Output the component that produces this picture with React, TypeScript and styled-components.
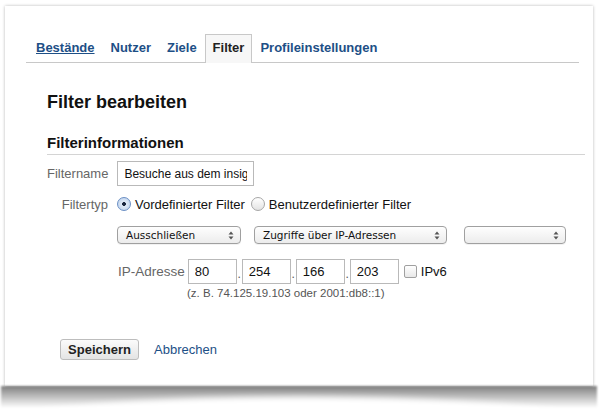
import React, { useState } from "react";
import styled, { createGlobalStyle } from "styled-components";

const GlobalStyle = createGlobalStyle`
  html, body {
    margin: 0;
    padding: 0;
    background: #fff;
  }
  body {
    font-family: "Liberation Sans", Arial, sans-serif;
    color: #222;
  }
`;

const TABS = ["Bestände", "Nutzer", "Ziele", "Filter", "Profileinstellungen"];

const SelectArrows = () => (
  <svg width="6" height="9" viewBox="0 0 6 9">
    <path d="M3 0.5 L5.5 3.5 H0.5 Z" fill="#555" />
    <path d="M3 8.5 L5.5 5.5 H0.5 Z" fill="#555" />
  </svg>
);

export default () => {
  const [type, setType] = useState("predefined");
  const [ipv6, setIpv6] = useState(false);

  return (
    <>
      <GlobalStyle />
      <Page>
        <Card>
          <TabBar>
            {TABS.map((t, i) => (
              <Tab key={t} active={t === "Filter"} underline={i === 0}>
                {t}
              </Tab>
            ))}
          </TabBar>

          <Content>
            <Heading>Filter bearbeiten</Heading>
            <SubHeading>Filterinformationen</SubHeading>

            <FieldRow top={6}>
              <Label>Filtername</Label>
              <TextInput defaultValue="Besuche aus dem insightsite" />
            </FieldRow>

            <FieldRow top={9}>
              <Label>Filtertyp</Label>
              <RadioRow>
                <RadioOption onClick={() => setType("predefined")}>
                  <Radio checked={type === "predefined"} />
                  Vordefinierter Filter
                </RadioOption>
                <RadioOption onClick={() => setType("custom")}>
                  <Radio checked={type === "custom"} />
                  Benutzerdefinierter Filter
                </RadioOption>
              </RadioRow>
            </FieldRow>

            <FieldRow top={13}>
              <Label />
              <SelectRow>
                <Select width={124}>
                  <span>Ausschließen</span>
                  <SelectArrows />
                </Select>
                <Select width={193}>
                  <span>Zugriffe über IP-Adressen</span>
                  <SelectArrows />
                </Select>
                <Select width={102} extra={4}>
                  <span />
                  <SelectArrows />
                </Select>
              </SelectRow>
            </FieldRow>

            <FieldRow top={15}>
              <Label />
              <IpBlock>
                <IpRow>
                  <IpLabel>IP-Adresse</IpLabel>
                  <OctetInput defaultValue="80" />
                  <Dot>.</Dot>
                  <OctetInput defaultValue="254" />
                  <Dot>.</Dot>
                  <OctetInput defaultValue="166" />
                  <Dot>.</Dot>
                  <OctetInput defaultValue="203" />
                  <CheckOption onClick={() => setIpv6(!ipv6)}>
                    <Checkbox checked={ipv6} />
                    IPv6
                  </CheckOption>
                </IpRow>
                <Hint>(z. B. 74.125.19.103 oder 2001:db8::1)</Hint>
              </IpBlock>
            </FieldRow>

            <Actions>
              <SaveButton>Speichern</SaveButton>
              <CancelLink href="#">Abbrechen</CancelLink>
            </Actions>
          </Content>
        </Card>
      </Page>
    </>
  );
};

const Page = styled.div`
  height: 416px;
  box-sizing: border-box;
  overflow: hidden;
  padding: 6px 14px 0 5px;
`;

const Card = styled.div`
  position: relative;
  height: 380px;
  box-sizing: border-box;
  padding-top: 28px;
  background: #fff;
  box-shadow: 0 0 3px rgba(0, 0, 0, 0.28);

  /* curled paper shadow under the card */
  &::after {
    content: "";
    position: absolute;
    left: -4px;
    right: -4px;
    top: 100%;
    height: 22px;
    background: linear-gradient(
      to bottom,
      rgba(0, 0, 0, 0.5),
      rgba(0, 0, 0, 0.22) 55%,
      rgba(0, 0, 0, 0)
    );
    filter: blur(1px);
    z-index: 0;
  }

  &::before {
    content: "";
    position: absolute;
    left: -30px;
    right: -30px;
    top: calc(100% + 11px);
    height: 70px;
    border-radius: 50%;
    background: #fff;
    filter: blur(3px);
    z-index: 1;
  }
`;

const TabBar = styled.div`
  display: flex;
  align-items: flex-end;
  height: 28px;
  margin: 0 14px 0 21px;
  padding-left: 2px;
  border-bottom: 1px solid #c8c8c8;
`;

const Tab = styled.a<{ active?: boolean; underline?: boolean }>`
  display: block;
  line-height: 26px;
  padding: 0 7px;
  box-sizing: border-box;
  font-size: 13px;
  font-weight: bold;
  cursor: pointer;
  color: ${(p) => (p.active ? "#222" : "#1d4f86")};
  text-decoration: ${(p) => (p.underline ? "underline" : "none")};
  background: ${(p) => (p.active ? "#f7f7f7" : "transparent")};
  border: 1px solid ${(p) => (p.active ? "#c8c8c8" : "transparent")};
  border-bottom: none;
  margin-bottom: ${(p) => (p.active ? "-1px" : "0")};
  height: ${(p) => (p.active ? "29px" : "28px")};
`;

const Content = styled.div`
  padding: 0 8px 0 42px;
`;

const Heading = styled.h1`
  margin: 28px 0 0;
  font-size: 18px;
  line-height: 22px;
  font-weight: bold;
  color: #111;
`;

const SubHeading = styled.h2`
  margin: 21px 0 0;
  padding-bottom: 2px;
  font-size: 15px;
  line-height: 18px;
  font-weight: bold;
  color: #111;
  border-bottom: 1px solid #d4d4d4;
`;

const FieldRow = styled.div<{ top: number }>`
  display: flex;
  align-items: center;
  gap: 9px;
  margin-top: ${(p) => p.top}px;
`;

const Label = styled.label`
  flex: 0 0 61px;
  font-size: 13px;
  color: #666;
  text-align: right;
  white-space: nowrap;
`;

const TextInput = styled.input`
  width: 137px;
  height: 25px;
  box-sizing: border-box;
  padding: 0 6px;
  border: 1px solid #b9b9b9;
  font-family: "Liberation Sans", Arial, sans-serif;
  font-size: 12px;
  color: #111;
  outline: none;
`;

const RadioRow = styled.div`
  display: flex;
  gap: 6px;
  height: 18px;
  align-items: center;
`;

const RadioOption = styled.span`
  display: flex;
  align-items: center;
  gap: 4px;
  font-size: 13px;
  color: #111;
  cursor: pointer;
`;

const Radio = styled.span<{ checked?: boolean }>`
  width: 12px;
  height: 12px;
  border-radius: 50%;
  border: 1px solid ${(p) => (p.checked ? "#6b8fc4" : "#a6a6a6")};
  background: ${(p) =>
    p.checked
      ? "radial-gradient(circle, #1a2740 0 1.6px, #dfeaf8 2.2px, #b7cde9 100%)"
      : "linear-gradient(#fff, #e3e3e3)"};
`;

const SelectRow = styled.div`
  display: flex;
  gap: 13px;
`;

const Select = styled.div<{ width: number; extra?: number }>`
  width: ${(p) => p.width}px;
  height: 18px;
  box-sizing: border-box;
  margin-left: ${(p) => p.extra || 0}px;
  display: flex;
  align-items: center;
  justify-content: space-between;
  padding: 0 6px 0 8px;
  border: 1px solid #a0a0a0;
  border-radius: 4px;
  background: linear-gradient(#fefefe, #ececec);
  box-shadow: 0 1px 0 rgba(0, 0, 0, 0.05);
  font-family: "DejaVu Sans", sans-serif;
  font-size: 10.5px;
  color: #111;
`;

const IpBlock = styled.div`
  display: flex;
  flex-direction: column;
`;

const IpRow = styled.div`
  display: flex;
  align-items: center;
`;

const IpLabel = styled.span`
  font-size: 13.5px;
  color: #666;
  margin: 0 3px 0 1px;
`;

const OctetInput = styled.input`
  width: 49px;
  height: 25px;
  box-sizing: border-box;
  padding: 0 6px;
  border: 1px solid #b9b9b9;
  font-family: "Liberation Sans", Arial, sans-serif;
  font-size: 13px;
  color: #111;
  outline: none;
`;

const Dot = styled.span`
  width: 5px;
  text-align: center;
  font-size: 12px;
  color: #555;
  align-self: flex-end;
  margin-bottom: 3px;
`;

const CheckOption = styled.span`
  display: flex;
  align-items: center;
  gap: 4px;
  margin-left: 5px;
  font-size: 13px;
  color: #111;
  cursor: pointer;
`;

const Checkbox = styled.span<{ checked?: boolean }>`
  width: 11px;
  height: 11px;
  border: 1px solid #a0a0a0;
  border-radius: 2px;
  background: ${(p) => (p.checked ? "#6b8fc4" : "linear-gradient(#fff, #e8e8e8)")};
`;

const Hint = styled.div`
  margin: 3px 0 0 70px;
  font-size: 11.5px;
  color: #555;
`;

const Actions = styled.div`
  display: flex;
  align-items: center;
  gap: 15px;
  margin: 40px 0 0 13px;
`;

const SaveButton = styled.button`
  width: 79px;
  height: 21px;
  padding: 0;
  border: 1px solid #bdbdbd;
  border-radius: 3px;
  background: linear-gradient(#fbfbfb, #e4e4e4);
  font-family: "Liberation Sans", Arial, sans-serif;
  font-size: 13px;
  font-weight: bold;
  color: #222;
  cursor: pointer;
`;

const CancelLink = styled.a`
  font-size: 13px;
  color: #1d4f86;
  text-decoration: none;
`;
